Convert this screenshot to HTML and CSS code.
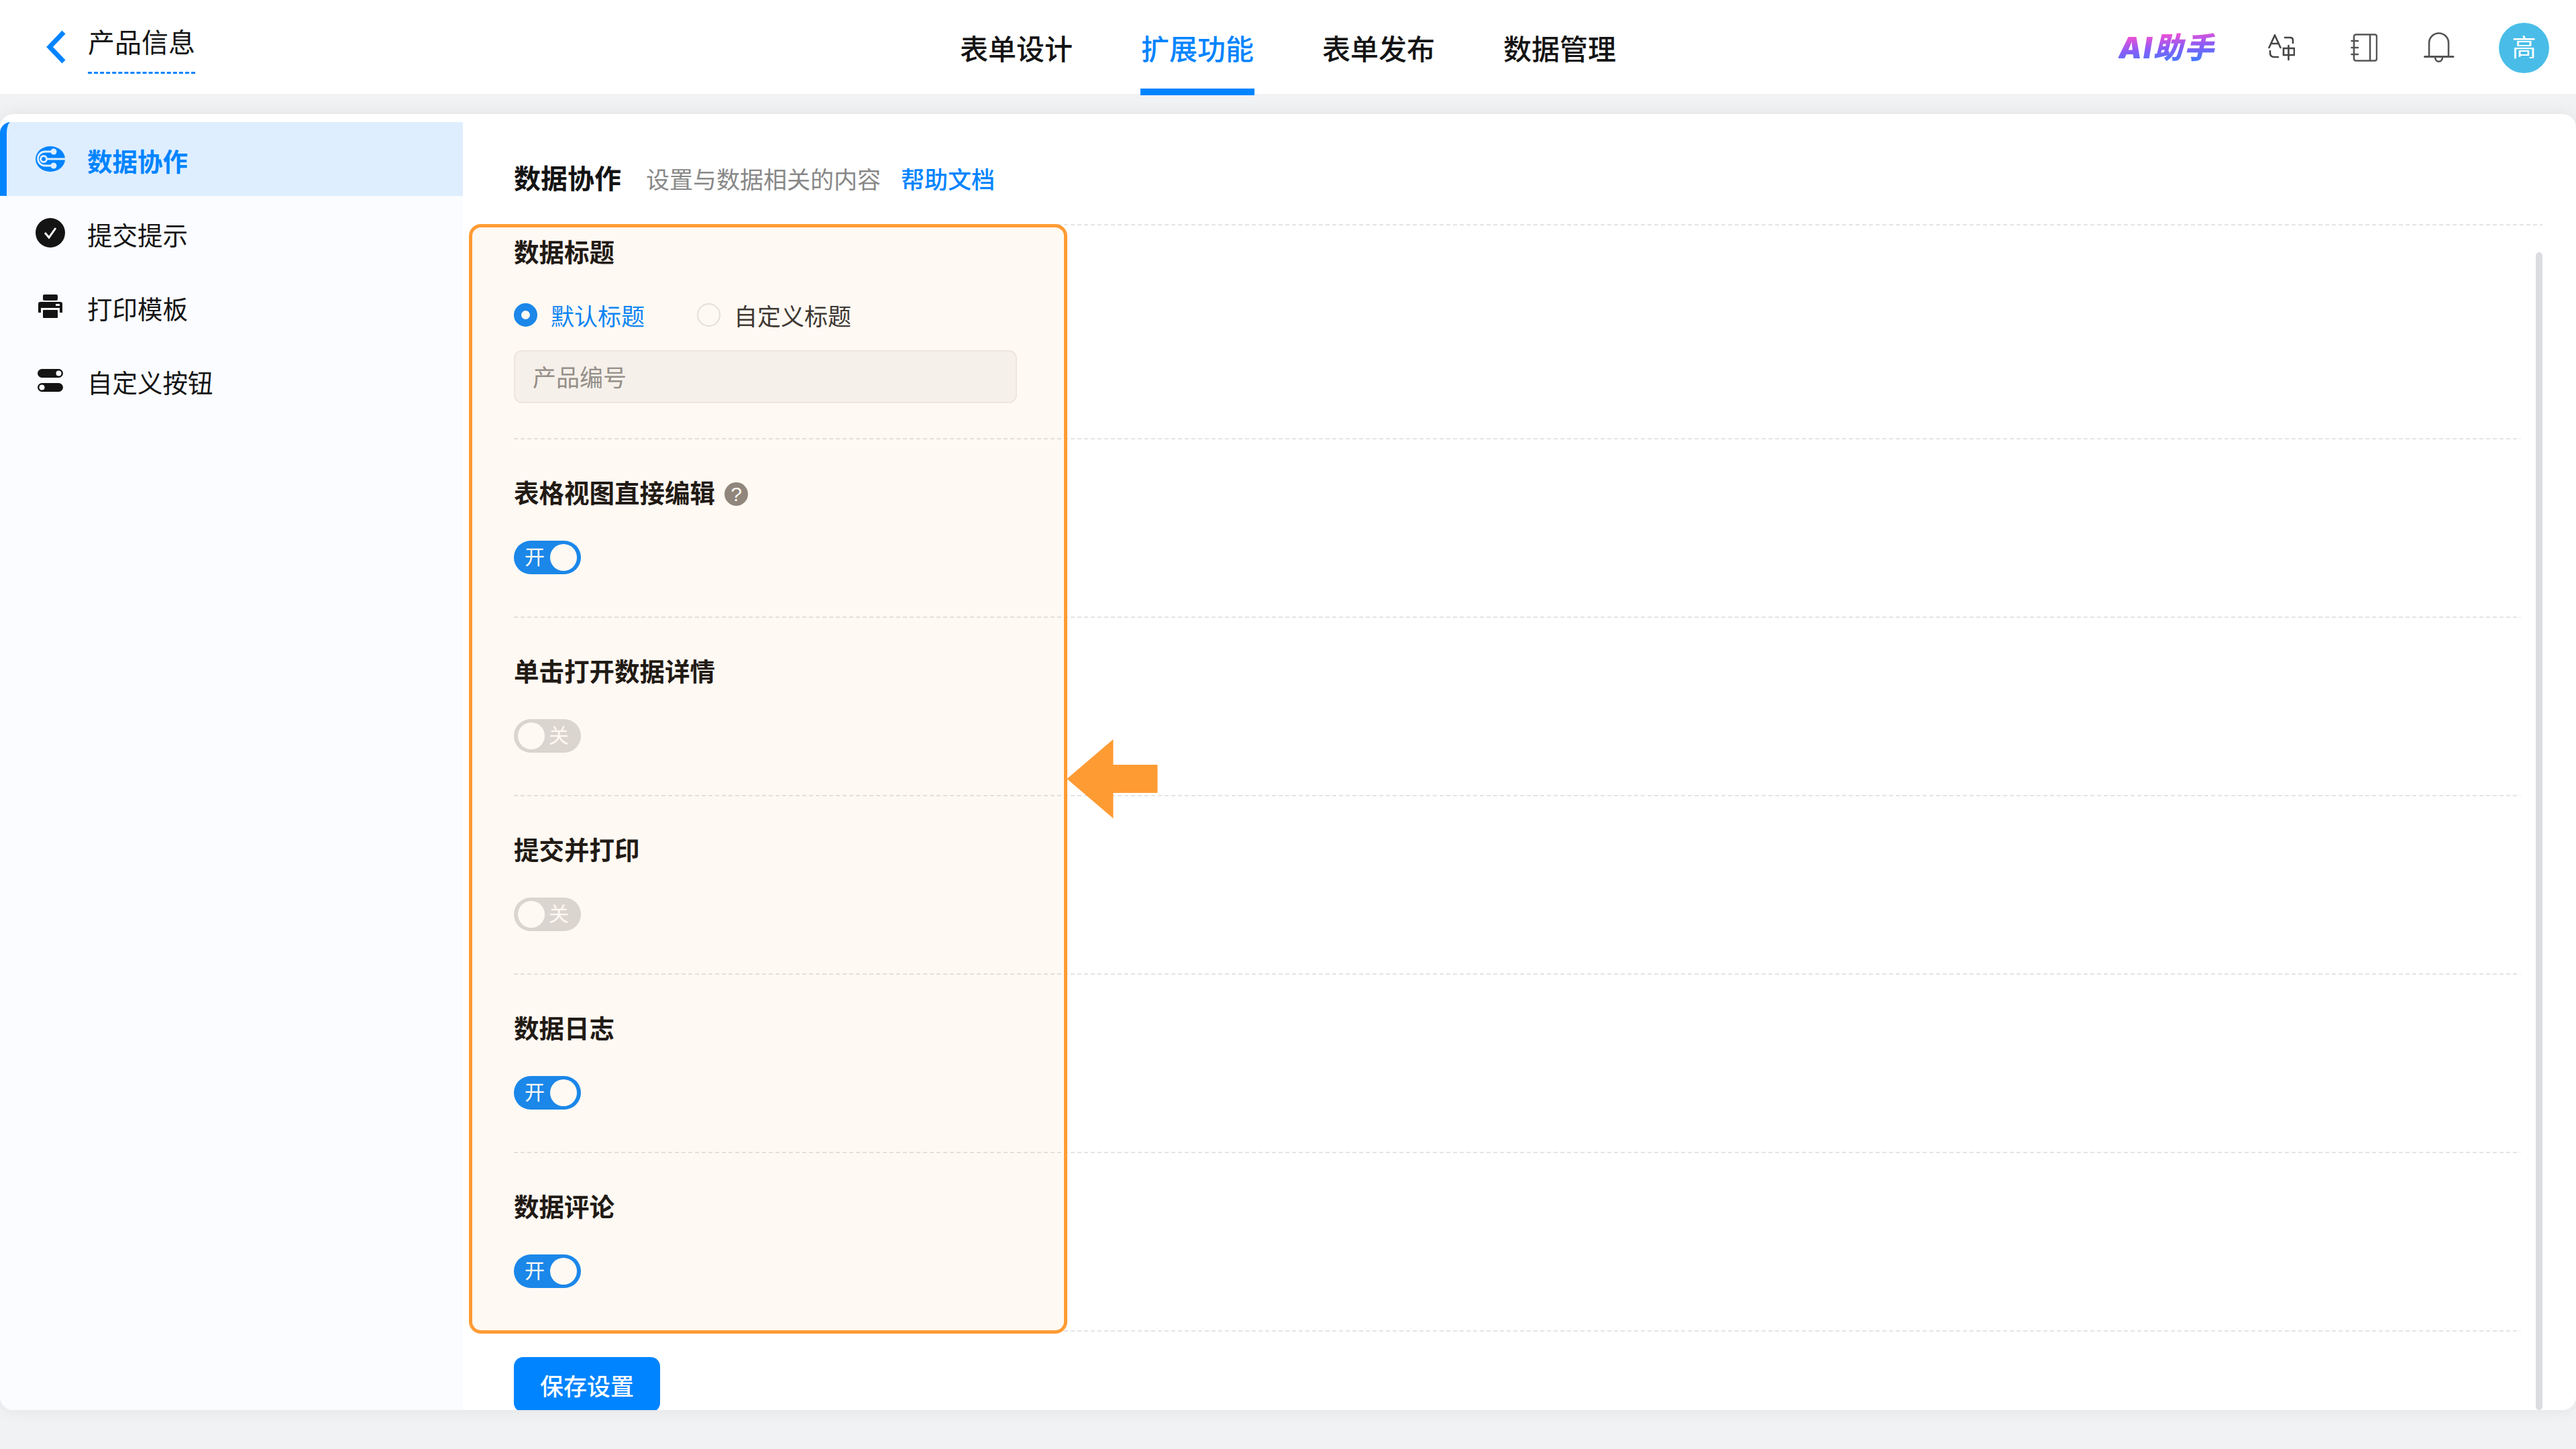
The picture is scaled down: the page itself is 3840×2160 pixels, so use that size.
FILE: index.html
```html
<!DOCTYPE html>
<html lang="zh-CN">
<head>
  <meta charset="UTF-8" />
  <title>产品信息 - 扩展功能</title>
  <link rel="stylesheet" href="styles.css">
</head>
<body>
  <header class="topbar">
    <div class="top-left">
      <svg class="back" viewBox="0 0 30 52"><path d="M26 4 L5 26 L26 48" fill="none" stroke="#0084ff" stroke-width="7"/></svg>
      <span class="app-name">产品信息</span>
    </div>
    <nav class="tabs">
      <a class="tab">表单设计</a>
      <a class="tab active">扩展功能</a>
      <a class="tab">表单发布</a>
      <a class="tab">数据管理</a>
    </nav>
    <div class="top-right">
      <span class="ai">AI助手</span>
      <svg class="ico-translate" viewBox="0 0 40 40" fill="none" stroke="#444" stroke-width="2.6" stroke-linecap="round">
        <path d="M1.500 20 L10 1.500 L18.500 20 M4.500 14 H15.500"/>
        <path d="M25 5 H33 Q37 5 37 9 V13"/>
        <path d="M3 25 V28 Q3 34 9 34 H15"/>
        <rect x="23" y="21" width="16" height="10"/>
        <path d="M30.500 17 V38"/>
      </svg>
      <svg class="ico-book" viewBox="0 0 40 42" fill="none" stroke="#555" stroke-width="2.6" stroke-linecap="round">
        <rect x="5" y="1.500" width="34" height="39" rx="3"/>
        <path d="M29 2 V40 M1.500 11 H11 M1.500 21 H11 M1.500 31 H11"/>
      </svg>
      <svg class="ico-bell" viewBox="0 0 46 46" fill="none" stroke="#555" stroke-width="2.6" stroke-linecap="round">
        <path d="M8 36 V16 A14.500 14.500 0 0 1 37 16 V36"/>
        <path d="M1.500 36.500 H44" stroke-width="3"/>
        <path d="M17 37 C17 46 28 46 28 37"/>
      </svg>
      <span class="avatar">高</span>
    </div>
  </header>

  <div class="card">
    <aside class="sidebar">
      <div class="side-item active">
        <svg class="side-ico" viewBox="0 0 44 38">
          <ellipse cx="22" cy="19" rx="22" ry="19" fill="#0084ff"/>
          <g fill="none" stroke="#deeeff" stroke-width="2.800">
            <path d="M27 8 H14 A10.500 10.500 0 0 0 14 29 H27"/>
            <path d="M17 19 H44"/>
            <circle cx="12" cy="19" r="4.500"/>
          </g>
          <circle cx="27" cy="8" r="4.500" fill="#deeeff"/>
          <circle cx="27" cy="29" r="4.500" fill="#deeeff"/>
        </svg>
        <span>数据协作</span>
      </div>
      <div class="side-item">
        <svg class="side-ico" viewBox="0 0 44 44">
          <circle cx="22" cy="22" r="22" fill="#141414"/>
          <path d="M14 22 L20 29 L30 15" fill="none" stroke="#fff" stroke-width="3"/>
        </svg>
        <span>提交提示</span>
      </div>
      <div class="side-item">
        <svg class="side-ico" viewBox="0 0 44 36">
          <rect x="11" y="0" width="22" height="9" rx="2" fill="#141414"/>
          <path d="M7 11 H37 Q40 11 40 14 V27 H36 V20 H8 V27 H4 V14 Q4 11 7 11 Z" fill="#141414"/>
          <rect x="11" y="23" width="22" height="12" rx="1" fill="#141414"/>
          <rect x="30" y="14" width="6" height="3" fill="#fafcff"/>
        </svg>
        <span>打印模板</span>
      </div>
      <div class="side-item">
        <svg class="side-ico" viewBox="0 0 44 34">
          <rect x="3" y="0" width="38" height="13" rx="6.500" fill="#141414"/>
          <circle cx="34.500" cy="6.500" r="4" fill="#fafcff"/>
          <rect x="3" y="21" width="38" height="13" rx="6.500" fill="#141414"/>
          <circle cx="9.500" cy="27.500" r="4" fill="#fafcff"/>
        </svg>
        <span>自定义按钮</span>
      </div>
    </aside>

    <main class="content">
      <div class="head">
        <h2>数据协作</h2>
        <span class="sub">设置与数据相关的内容</span>
        <a class="help">帮助文档</a>
      </div>

      <div class="form">
        <section class="row first">
          <h3>数据标题</h3>
          <div class="radios">
            <label class="radio on"><i></i>默认标题</label>
            <label class="radio"><i></i>自定义标题</label>
          </div>
          <input class="field" type="text" placeholder="产品编号">
        </section>

        <section class="row">
          <h3>表格视图直接编辑 <span class="q">?</span></h3>
          <div class="toggle on"><em>开</em><b></b></div>
        </section>

        <section class="row">
          <h3>单击打开数据详情</h3>
          <div class="toggle"><b></b><em>关</em></div>
        </section>

        <section class="row">
          <h3>提交并打印</h3>
          <div class="toggle"><b></b><em>关</em></div>
        </section>

        <section class="row">
          <h3>数据日志</h3>
          <div class="toggle on"><em>开</em><b></b></div>
        </section>

        <section class="row">
          <h3>数据评论</h3>
          <div class="toggle on"><em>开</em><b></b></div>
        </section>
      </div>

      <button class="save">保存设置</button>
      <div class="scrollbar"></div>
    </main>

    <!-- annotation over the form -->
    <div class="mark"></div>
    <svg class="arrow" viewBox="0 0 135 118"><path d="M0 59 L69 0 V38 H135 V80 H69 V118 Z" fill="#ff9b33"/></svg>
  </div>
</body>
</html>
```

FILE: styles.css
```css
* {
  box-sizing: border-box;
}

html, body {
  margin: 0;
  height: 100%;
}

body {
  width: 3840px;
  height: 2160px;
  overflow: hidden;
  background: #f1f2f4;
  color: #141414;
  font-family: "Liberation Sans", "Noto Sans CJK SC", sans-serif;
}

.topbar {
  height: 140px;
  background: #fff;
  display: grid;
  grid-template-columns: 1fr auto 1fr;
  align-items: center;
}

.top-left {
  display: flex;
  align-items: flex-start;
  padding: 43px 0 0 69px;
  height: 140px;
}

.back {
  width: 30px;
  height: 52px;
}

.app-name {
  margin-left: 32px;
  margin-top: -9px;
  height: 75px;
  line-height: 58px;
  font-size: 40px;
  border-bottom: 3px dashed #0084ff;
}

.tabs {
  display: flex;
  gap: 100px;
  height: 142px;
  align-self: start;
}

.tab {
  width: 170px;
  height: 142px;
  padding-top: 45px;
  line-height: 60px;
  text-align: center;
  font-size: 42px;
  font-weight: 500;
  white-space: nowrap;
}

.tab.active {
  color: #0084ff;
  border-bottom: 10px solid #0084ff;
}

.top-right {
  display: flex;
  align-items: center;
  justify-content: flex-end;
  padding-right: 40px;
}

.ai {
  width: 150px;
  margin-right: -3px;
  font-family: Inter, "Noto Sans CJK SC", sans-serif;
  font-size: 44px;
  line-height: 50px;
  font-weight: 900;
  font-style: italic;
  letter-spacing: 2px;
  white-space: nowrap;
  background: linear-gradient(175deg, #ff4fd0 12%, #8a5cf5 50%, #3f7dff 88%);
  -webkit-background-clip: text;
  background-clip: text;
  color: transparent;
}

.ico-translate {
  width: 40px;
  height: 40px;
  margin-left: 76px;
}

.ico-book {
  width: 40px;
  height: 42px;
  margin-left: 83px;
}

.ico-bell {
  width: 46px;
  height: 46px;
  margin-left: 69px;
}

.avatar {
  width: 75px;
  height: 75px;
  margin-left: 66px;
  border-radius: 50%;
  background: #49bde8;
  color: #fff;
  font-size: 36px;
  line-height: 75px;
  text-align: center;
}

.card {
  position: relative;
  margin-top: 30px;
  height: 1932px;
  display: flex;
  background: #fff;
  border-radius: 20px;
  box-shadow: 0 0 24px rgba(0, 0, 0, 0.07);
  overflow: hidden;
}

.sidebar {
  width: 690px;
  margin-top: 12px;
  background: #fafcff;
  flex-shrink: 0;
}

.side-item {
  height: 110px;
  display: flex;
  align-items: center;
  padding-left: 53px;
  font-size: 37.500px;
}

.side-item span {
  margin: 2px 0 0 33px;
}

.side-ico {
  width: 44px;
  height: 44px;
}

.side-item.active {
  background: #deeeff;
  border-left: 10px solid #0084ff;
  border-top-left-radius: 16px;
  padding-left: 43px;
  color: #0084ff;
  font-weight: 700;
}

.content {
  position: relative;
  flex: 1;
  padding-left: 76px;
}

.head {
  height: 166px;
  margin-right: 50px;
  display: flex;
  align-items: baseline;
  padding-top: 67px;
  background: repeating-linear-gradient(to right, #e4e4e4 0 6px, transparent 6px 10px) left bottom / 100% 2px no-repeat;
}

.head h2 {
  margin: 0;
  font-size: 40px;
  line-height: 60px;
  font-weight: 700;
}

.sub {
  margin-left: 37px;
  font-size: 35px;
  color: #888;
}

.help {
  margin-left: 30px;
  font-size: 35px;
  font-weight: 500;
  color: #0084ff;
}

.form {
  width: 2991px;
}

.row {
  height: 266px;
  padding-top: 51px;
  background: repeating-linear-gradient(to right, #e4e4e4 0 6px, transparent 6px 10px) left bottom / 100% 2px no-repeat;
}

.row.first {
  height: 319px;
  padding-top: 11px;
}

.row h3 {
  margin: 0;
  height: 60px;
  display: flex;
  align-items: center;
  font-size: 37.500px;
  line-height: 60px;
  font-weight: 700;
}

.q {
  width: 35px;
  height: 35px;
  margin-left: 14px;
  border-radius: 50%;
  background: #8a8580;
  color: #fff;
  font-size: 30px;
  font-weight: 400;
  line-height: 35px;
  text-align: center;
}

.radios {
  display: flex;
  margin-top: 32px;
  height: 60px;
}

.radio {
  display: flex;
  align-items: center;
  font-size: 35px;
  color: #333;
  margin-right: 78px;
}

.radio i {
  width: 35px;
  height: 35px;
  margin-right: 20px;
  border-radius: 50%;
  border: 2px solid #e4e4e4;
  background: #fff;
}

.radio.on {
  color: #0084ff;
}

.radio.on i {
  border: 11px solid #0d86f5;
}

.field {
  display: block;
  width: 750px;
  height: 79px;
  margin-top: 23px;
  padding: 4px 26px 0;
  border: 2px solid #ecebe9;
  border-radius: 12px;
  background: #f6f6f6;
  font-family: inherit;
  font-size: 35px;
}

.field::placeholder {
  color: #8f8f8f;
  opacity: 1;
}

.toggle {
  display: flex;
  align-items: center;
  width: 100px;
  height: 50px;
  margin-top: 40px;
  padding: 0 12px 0 6px;
  border-radius: 25px;
  background: #d9d9d9;
}

.toggle.on {
  padding: 0 6px 0 8px;
  background: #0d86f5;
}

.toggle b {
  width: 40px;
  height: 40px;
  border-radius: 50%;
  background: #fff;
}

.toggle em {
  flex: 1;
  font-size: 30px;
  font-style: normal;
  line-height: 50px;
  text-align: center;
  color: #fff;
}

.save {
  display: block;
  width: 218px;
  height: 82px;
  margin-top: 38px;
  border: 0;
  border-radius: 14px;
  background: #0084ff;
  color: #fff;
  font-family: inherit;
  font-size: 35px;
  font-weight: 500;
}

.scrollbar {
  position: absolute;
  top: 206px;
  right: 50px;
  bottom: 0;
  width: 10px;
  border-radius: 5px;
  background: #dcdde0;
}

.mark {
  position: absolute;
  left: 699px;
  top: 164px;
  width: 892px;
  height: 1654px;
  border: 5px solid #ff9b33;
  border-radius: 18px;
  background: rgba(255, 155, 51, 0.06);
}

.arrow {
  position: absolute;
  left: 1590px;
  top: 932px;
  width: 136px;
  height: 118px;
}
```
